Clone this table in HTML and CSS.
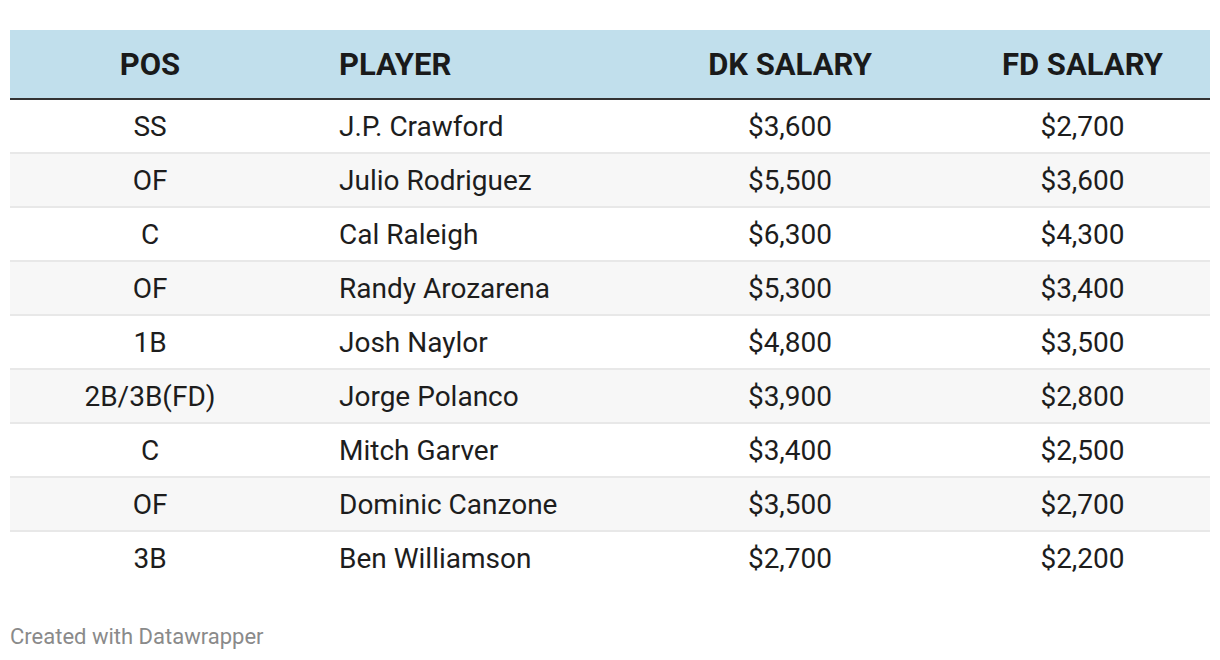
FILE: index.html
```html
<!DOCTYPE html>
<html>
<head>
<meta charset="utf-8">
<link rel="stylesheet" href="styles.css">
</head>
<body>
<div class="wrap">
  <table class="tbl">
    <colgroup>
      <col class="c1"><col class="c2"><col class="c3"><col class="c4">
    </colgroup>
    <thead>
      <tr><th class="ctr">POS</th><th class="lft">PLAYER</th><th class="ctr">DK SALARY</th><th class="ctr">FD SALARY</th></tr>
    </thead>
    <tbody>
      <tr><td class="ctr">SS</td><td class="lft">J.P. Crawford</td><td class="ctr">$3,600</td><td class="ctr">$2,700</td></tr>
      <tr><td class="ctr">OF</td><td class="lft">Julio Rodriguez</td><td class="ctr">$5,500</td><td class="ctr">$3,600</td></tr>
      <tr><td class="ctr">C</td><td class="lft">Cal Raleigh</td><td class="ctr">$6,300</td><td class="ctr">$4,300</td></tr>
      <tr><td class="ctr">OF</td><td class="lft">Randy Arozarena</td><td class="ctr">$5,300</td><td class="ctr">$3,400</td></tr>
      <tr><td class="ctr">1B</td><td class="lft">Josh Naylor</td><td class="ctr">$4,800</td><td class="ctr">$3,500</td></tr>
      <tr><td class="ctr">2B/3B(FD)</td><td class="lft">Jorge Polanco</td><td class="ctr">$3,900</td><td class="ctr">$2,800</td></tr>
      <tr><td class="ctr">C</td><td class="lft">Mitch Garver</td><td class="ctr">$3,400</td><td class="ctr">$2,500</td></tr>
      <tr><td class="ctr">OF</td><td class="lft">Dominic Canzone</td><td class="ctr">$3,500</td><td class="ctr">$2,700</td></tr>
      <tr><td class="ctr">3B</td><td class="lft">Ben Williamson</td><td class="ctr">$2,700</td><td class="ctr">$2,200</td></tr>
    </tbody>
  </table>
  <div class="foot">Created with Datawrapper</div>
</div>
</body>
</html>
```
FILE: styles.css
```css
html, body { margin: 0; padding: 0; background: #fff; }
body { font-family: Roboto, "Liberation Sans", sans-serif; color: #1d1d1d; }
.wrap { padding: 30px 10px 0 10px; }
.tbl { width: 1200px; border-collapse: collapse; table-layout: fixed; }
.c1 { width: 280px; }
.c2 { width: 335px; }
.c3 { width: 330px; }
.c4 { width: 255px; }
th {
  background: #c1dfec;
  height: 68px;
  padding: 0;
  font-size: 31px;
  font-weight: 700;
  color: #1a1a1a;
  border-bottom: 2px solid #333;
}
td {
  height: 52px;
  padding: 0;
  font-size: 28px;
  font-weight: 400;
  border-bottom: 2px solid #e8e8e8;
}
tbody tr:nth-child(even) td { background: #f7f7f7; }
tbody tr:last-child td { border-bottom: none; }
.ctr { text-align: center; }
.lft { text-align: left; padding-left: 49px; }
.foot { margin-top: 40px; font-size: 22px; color: #8a8a8a; }
```
